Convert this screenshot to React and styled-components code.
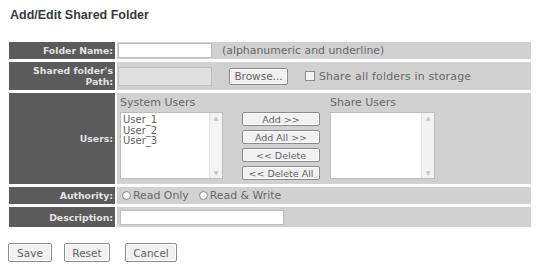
import React from "react";
import styled, { createGlobalStyle } from "styled-components";

const Global = createGlobalStyle`
  body {
    margin: 0;
    background: #ffffff;
    font-family: "DejaVu Sans", Verdana, sans-serif;
  }
`;

const Page = styled.div`
  padding: 8px 6px 0 9px;
  width: 522px;
`;

const Title = styled.h1`
  margin: 0 0 20px 1px;
  font-family: "Liberation Sans", Arial, sans-serif;
  font-size: 12.5px;
  line-height: 14px;
  font-weight: bold;
  color: #3a3a3a;
`;

const Form = styled.div`
  display: grid;
  grid-template-columns: 106px 1fr;
  grid-template-rows: 17px 28px 91px 17px 20px;
  column-gap: 2px;
  row-gap: 3px;
`;

const Label = styled.div`
  background: #5b5b5b;
  color: #e2e2e2;
  font-size: 9.3px;
  font-weight: bold;
  text-align: right;
  padding-right: 2px;
  display: flex;
  align-items: center;
  justify-content: flex-end;
  line-height: 11px;
`;

const Cell = styled.div`
  background: #d1d1d1;
  display: flex;
  align-items: center;
  padding-left: ${(p) => p.$pad || 1}px;
  font-size: 10.9px;
  color: #686868;
`;

const TextInput = styled.div`
  width: ${(p) => p.$w}px;
  height: ${(p) => p.$h}px;
  background: ${(p) => (p.$disabled ? "#e0e0e0" : "#ffffff")};
  border: 1px solid #bdbdbd;
  box-sizing: border-box;
`;

const Hint = styled.span`
  margin-left: 10px;
  white-space: nowrap;
`;

const Button = styled.button`
  font-family: "DejaVu Sans", Verdana, sans-serif;
  font-size: ${(p) => p.$fs || 10.5}px;
  color: #646464;
  background: #f1f1f1;
  border: 1px solid #8c8c8c;
  border-radius: 2px;
  box-shadow: inset 0 0 0 1px #ffffff;
  width: ${(p) => p.$w}px;
  height: ${(p) => p.$h}px;
  margin-left: ${(p) => p.$ml || 0}px;
  padding: 0;
  white-space: nowrap;
`;

const Check = styled.span`
  display: inline-block;
  width: 8px;
  height: 8px;
  border: 1px solid #8a8a8a;
  background: #f4f4f4;
  margin-right: 4px;
`;

const CheckLabel = styled.label`
  display: flex;
  align-items: center;
  margin-left: 17px;
  white-space: nowrap;
  letter-spacing: 0.2px;
`;

const UsersCell = styled(Cell)`
  align-items: flex-end;
  padding-left: 3px;
  padding-bottom: 5px;
  box-sizing: border-box;
`;

const UserColumn = styled.div`
  display: flex;
  flex-direction: column;
  margin-left: ${(p) => p.$ml || 0}px;
`;

const ColumnTitle = styled.div`
  font-size: 11px;
  line-height: 12px;
  margin-bottom: 3px;
  white-space: nowrap;
`;

const ListBox = styled.div`
  width: ${(p) => p.$w}px;
  height: 67px;
  background: #ffffff;
  border: 1px solid #bcbcbc;
  box-sizing: border-box;
  display: flex;
`;

const Items = styled.div`
  flex: 1;
  padding: 2px 0 0 2px;
  font-size: 10px;
  line-height: 10.5px;
  color: #626262;
`;

const Scroll = styled.div`
  width: 12px;
  background: #f3f3f3;
  border-left: 1px solid #e2e2e2;
  display: flex;
  flex-direction: column;
  justify-content: space-between;
  align-items: center;
  color: #c4c4c4;
  font-size: 6px;
  line-height: 10px;
`;

const ButtonColumn = styled.div`
  display: flex;
  flex-direction: column;
  gap: 4px;
  margin-left: 19px;
  margin-bottom: -1px;
`;

const Radio = styled.span`
  display: inline-block;
  width: 7px;
  height: 7px;
  border-radius: 50%;
  border: 1px solid #8a8a8a;
  background: ${(p) => (p.$on ? "#f6f6f6" : "#ffffff")};
  margin-right: 2px;
`;

const RadioLabel = styled.label`
  display: flex;
  align-items: center;
  margin-right: 10px;
  white-space: nowrap;
`;

const Actions = styled.div`
  display: flex;
  gap: 12px;
  margin-top: 16px;
  margin-left: -1px;
`;

function List({ w, items }) {
  return (
    <ListBox $w={w}>
      <Items>
        {items.map((u) => (
          <div key={u}>{u}</div>
        ))}
      </Items>
      <Scroll>
        <span>▲</span>
        <span>▼</span>
      </Scroll>
    </ListBox>
  );
}

export default function App() {
  return (
    <>
      <Global />
      <Page>
        <Title>Add/Edit Shared Folder</Title>
        <Form>
          <Label>Folder Name:</Label>
          <Cell>
            <TextInput $w={94} $h={15} />
            <Hint>(alphanumeric and underline)</Hint>
          </Cell>

          <Label>
            Shared folder's
            <br />
            Path:
          </Label>
          <Cell>
            <TextInput $w={94} $h={19} $disabled />
            <Button $w={59} $h={17} $ml={17}>
              Browse...
            </Button>
            <CheckLabel>
              <Check />
              Share all folders in storage
            </CheckLabel>
          </Cell>

          <Label>Users:</Label>
          <UsersCell>
            <UserColumn>
              <ColumnTitle>System Users</ColumnTitle>
              <List w={103} items={["User_1", "User_2", "User_3"]} />
            </UserColumn>
            <ButtonColumn>
              <Button $w={78} $h={14} $fs={9.5}>Add &gt;&gt;</Button>
              <Button $w={78} $h={14} $fs={9.5}>Add All &gt;&gt;</Button>
              <Button $w={78} $h={14} $fs={9.5}>&lt;&lt; Delete</Button>
              <Button $w={78} $h={14} $fs={9.5}>&lt;&lt; Delete All</Button>
            </ButtonColumn>
            <UserColumn $ml={10}>
              <ColumnTitle>Share Users</ColumnTitle>
              <List w={105} items={[]} />
            </UserColumn>
          </UsersCell>

          <Label>Authority:</Label>
          <Cell $pad={5}>
            <RadioLabel>
              <Radio $on />
              Read Only
            </RadioLabel>
            <RadioLabel>
              <Radio />
              Read &amp; Write
            </RadioLabel>
          </Cell>

          <Label>Description:</Label>
          <Cell $pad={3}>
            <TextInput $w={164} $h={15} />
          </Cell>
        </Form>
        <Actions>
          <Button $w={44} $h={19}>Save</Button>
          <Button $w={46} $h={19}>Reset</Button>
          <Button $w={52} $h={19} $ml={3}>Cancel</Button>
        </Actions>
      </Page>
    </>
  );
}
